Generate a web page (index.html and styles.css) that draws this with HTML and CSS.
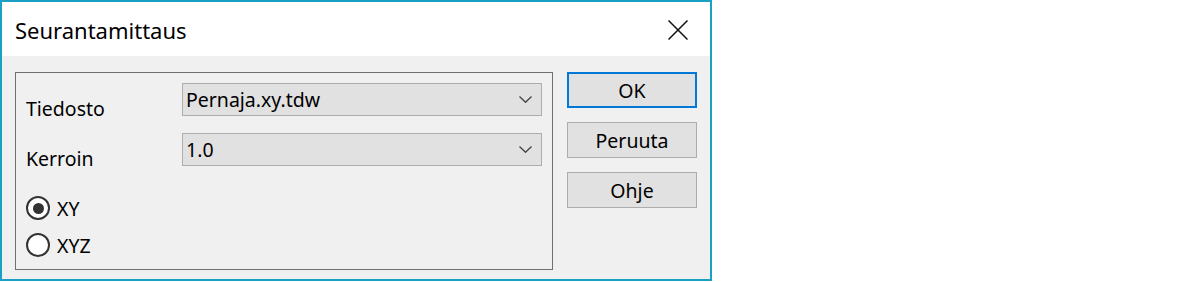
FILE: index.html
```html
<!DOCTYPE html>
<html lang="fi">
<head>
    <meta charset="UTF-8">
    <title>Seurantamittaus</title>
    <link rel="stylesheet" href="styles.css">
</head>
<body>
    <div class="window">
        <div class="titlebar">
            <span class="title">Seurantamittaus</span>
            <svg class="close" width="20" height="20" viewBox="0 0 20 20">
                <path d="M0.5 0.5 L19.5 19.5 M19.5 0.5 L0.5 19.5" stroke="#111" stroke-width="1.5" fill="none"/>
            </svg>
        </div>

        <div class="client">
            <div class="group">
                <div class="field">
                    <span class="label">Tiedosto</span>
                    <div class="combo">
                        <span class="combo-value">Pernaja.xy.tdw</span>
                        <svg class="chevron" width="13" height="7" viewBox="0 0 13 7">
                            <polyline points="0.5,0.5 6.5,6.3 12.5,0.5" stroke="#444" stroke-width="1.3" fill="none"/>
                        </svg>
                    </div>
                </div>
                <div class="field">
                    <span class="label">Kerroin</span>
                    <div class="combo">
                        <span class="combo-value">1.0</span>
                        <svg class="chevron" width="13" height="7" viewBox="0 0 13 7">
                            <polyline points="0.5,0.5 6.5,6.3 12.5,0.5" stroke="#444" stroke-width="1.3" fill="none"/>
                        </svg>
                    </div>
                </div>

                <div class="radios">
                    <label class="radio">
                        <span class="radio-dot checked"></span>
                        <span>XY</span>
                    </label>
                    <label class="radio">
                        <span class="radio-dot"></span>
                        <span>XYZ</span>
                    </label>
                </div>
            </div>

            <div class="buttons">
                <button class="btn btn-default">OK</button>
                <button class="btn">Peruuta</button>
                <button class="btn">Ohje</button>
            </div>
        </div>
    </div>
</body>
</html>
```

FILE: styles.css
```css
* {
    margin: 0;
    padding: 0;
    box-sizing: border-box;
}

body {
    font-family: 'Noto Sans', 'Liberation Sans', sans-serif;
    font-size: 19.5px;
    color: #000;
    background: #fff;
}

.window {
    width: 712px;
    height: 281px;
    border: 2px solid #1aa0c4;
    display: flex;
    flex-direction: column;
}

.titlebar {
    height: 54px;
    background: #fff;
    display: flex;
    align-items: center;
    justify-content: space-between;
    padding: 2px 22px 0 13px;
}

.title {
    font-size: 22px;
}

.close {
    display: block;
}

.client {
    flex: 1;
    background: #f0f0f0;
    display: flex;
    gap: 14px;
    padding: 16px 0 0 13px;
}

.group {
    width: 538px;
    height: 198px;
    border: 1px solid #707070;
    padding: 10px 10px;
}

.field {
    display: flex;
    margin-bottom: 17px;
}

.label {
    width: 156px;
    height: 33px;
    padding-top: 14px;
    line-height: 24px;
}

.combo {
    width: 360px;
    height: 33px;
    background: #e1e1e1;
    border: 1px solid #adadad;
    display: flex;
    align-items: center;
    justify-content: space-between;
    padding: 0 9px 0 3px;
}

.combo-value {
    line-height: 31px;
}

.chevron {
    display: block;
}

.radios {
    margin-top: 30px;
    display: flex;
    flex-direction: column;
    gap: 13px;
}

.radio {
    display: flex;
    align-items: center;
    gap: 7px;
    height: 24px;
}

.radio-dot {
    width: 24px;
    height: 24px;
    border: 2px solid #333;
    border-radius: 50%;
    background: #fff;
    display: flex;
    align-items: center;
    justify-content: center;
}

.radio-dot.checked::after {
    content: '';
    width: 11px;
    height: 11px;
    border-radius: 50%;
    background: #333;
}

.buttons {
    width: 130px;
    display: flex;
    flex-direction: column;
    gap: 14px;
}

.btn {
    height: 36px;
    background: #e1e1e1;
    border: 1px solid #adadad;
    font-family: inherit;
    font-size: 19.5px;
    color: #000;
}

.btn-default {
    border: 2px solid #0078d7;
}
```
